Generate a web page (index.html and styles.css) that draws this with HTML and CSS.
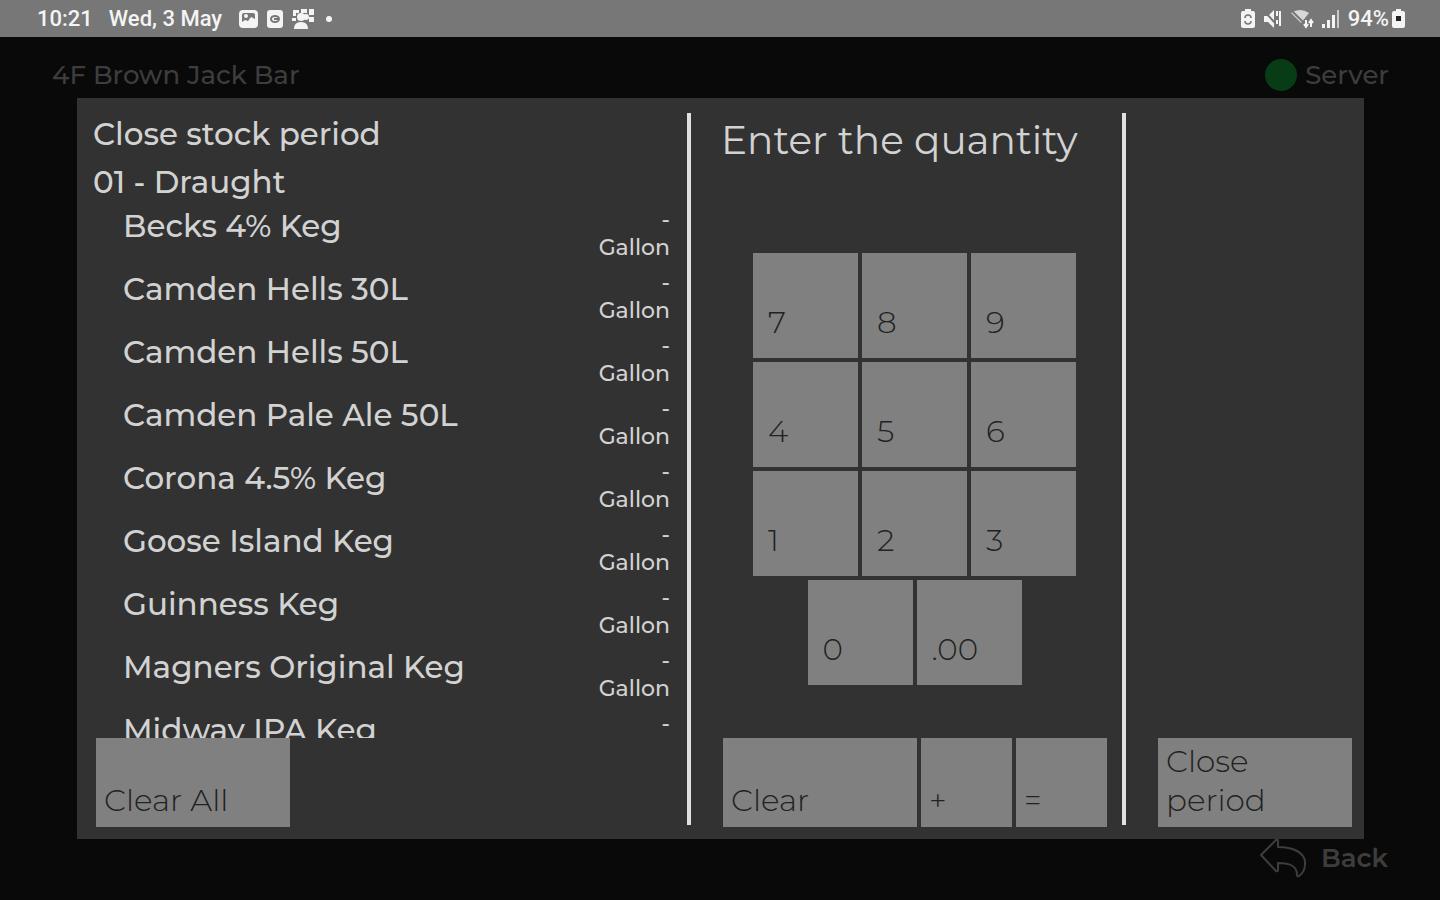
FILE: index.html
```html
<!DOCTYPE html>
<html lang="en">
<head>
  <meta charset="UTF-8">
  <meta name="viewport" content="width=device-width, initial-scale=1.0">
  <title>Close stock period</title>
  <link rel="stylesheet" href="styles.css">
</head>
<body>

  <div class="status-bar">
    <span class="clock">10:21</span>
    <span class="date">Wed, 3 May</span>
    <div class="notifications">
      <svg width="19" height="18" viewBox="0 0 19 18">
        <rect x="0" y="0" width="19" height="18" rx="4" fill="#f4f4f4"/>
        <path d="M3 5q0-2 2-2h9q2 0 2 2v4l-4-2-3 4-3-1-3 2z" fill="#777"/>
        <circle cx="7" cy="6" r="2" fill="#f4f4f4"/>
      </svg>
      <svg width="16" height="18" viewBox="0 0 16 18">
        <rect x="0" y="0" width="16" height="18" rx="3" fill="#f4f4f4"/>
        <ellipse cx="8" cy="9" rx="4" ry="3" fill="none" stroke="#777" stroke-width="2"/>
        <path d="M7 9h5" stroke="#777" stroke-width="2"/>
      </svg>
      <svg width="23" height="20" viewBox="0 0 23 20">
        <path d="M1 1h6v3H4v3H1zM9 0h6v4H9zM17 0h5v6h-5zM17 8h5v5h-5zM0 9h4v3H0z" fill="#f4f4f4"/>
        <circle cx="9" cy="8" r="4" fill="#f4f4f4"/>
        <circle cx="14" cy="8" r="3" fill="#f4f4f4"/>
        <path d="M2 20c0-4 2-7 7-7s7 3 7 7z" fill="#f4f4f4"/>
      </svg>
      <span class="dot"></span>
    </div>
    <div class="system">
      <svg width="14" height="19" viewBox="0 0 14 19">
        <path d="M4 0h6v2h2q2 0 2 2v13q0 2-2 2H2q-2 0-2-2V4q0-2 2-2h2z" fill="#f4f4f4"/>
        <path d="M4 9q0-3 3-3t3 3M4 12q0 3 3 3t3-3" fill="none" stroke="#777" stroke-width="1.5"/>
      </svg>
      <svg width="19" height="20" viewBox="0 0 19 20">
        <path d="M1 7h4l6-6v18l-6-6H1z" fill="#f4f4f4"/>
        <path d="M1 2l14 15" stroke="#777" stroke-width="2"/>
        <path d="M14 2v5M17 2v15M14 11v4" stroke="#f4f4f4" stroke-width="2"/>
      </svg>
      <svg width="24" height="20" viewBox="0 0 24 20">
        <path d="M1 4q9-6 18 0l-8 10z" fill="#d8d8d8"/>
        <path d="M2 2l14 14" stroke="#777" stroke-width="2"/>
        <path d="M16 11v7M14 15l2 3 2-3M21 18v-7M19 14l2-3 2 3" stroke="#f4f4f4" stroke-width="2" fill="none"/>
      </svg>
      <svg width="18" height="20" viewBox="0 0 18 20">
        <path d="M0 15h3v4H0zM5 11h3v8H5zM10 6h3v13h-3z" fill="#f4f4f4"/>
        <path d="M15 1h2v18h-2z" fill="#c9c9c9"/>
      </svg>
      <span class="percent">94%</span>
      <svg width="13" height="19" viewBox="0 0 13 19">
        <path d="M4 0h5v2h2q2 0 2 2v13q0 2-2 2H2q-2 0-2-2V4q0-2 2-2h2z" fill="#f4f4f4"/>
        <path d="M4 7h5v5H4z" fill="#222"/>
      </svg>
    </div>
  </div>

  <header class="top-bar">
    <span>4F Brown Jack Bar</span>
    <span class="server"><span class="server-light"></span>Server</span>
  </header>

  <main class="panel">
    <section class="stock">
      <h1>Close stock period</h1>
      <h2>01 - Draught</h2>
      <ul class="items">
        <li><span class="name">Becks 4% Keg</span><span class="amount">-<br>Gallon</span></li>
        <li><span class="name">Camden Hells 30L</span><span class="amount">-<br>Gallon</span></li>
        <li><span class="name">Camden Hells 50L</span><span class="amount">-<br>Gallon</span></li>
        <li><span class="name">Camden Pale Ale 50L</span><span class="amount">-<br>Gallon</span></li>
        <li><span class="name">Corona 4.5% Keg</span><span class="amount">-<br>Gallon</span></li>
        <li><span class="name">Goose Island Keg</span><span class="amount">-<br>Gallon</span></li>
        <li><span class="name">Guinness Keg</span><span class="amount">-<br>Gallon</span></li>
        <li><span class="name">Magners Original Keg</span><span class="amount">-<br>Gallon</span></li>
        <li><span class="name">Midway IPA Keg</span><span class="amount">-</span></li>
      </ul>
      <div class="actions">
        <button class="btn wide" type="button">Clear All</button>
      </div>
    </section>

    <div class="divider"></div>

    <section class="quantity">
      <h2 class="prompt">Enter the quantity</h2>
      <div class="keypad">
        <button class="key" type="button">7</button>
        <button class="key" type="button">8</button>
        <button class="key" type="button">9</button>
        <button class="key" type="button">4</button>
        <button class="key" type="button">5</button>
        <button class="key" type="button">6</button>
        <button class="key" type="button">1</button>
        <button class="key" type="button">2</button>
        <button class="key" type="button">3</button>
        <button class="key" type="button">0</button>
        <button class="key" type="button">.00</button>
      </div>
      <div class="actions">
        <button class="btn wide" type="button">Clear</button>
        <button class="btn sign" type="button">+</button>
        <button class="btn sign" type="button">=</button>
      </div>
    </section>

    <div class="divider"></div>

    <section class="finish">
      <div class="actions">
        <button class="btn wide" type="button">Close period</button>
      </div>
    </section>
  </main>

  <footer class="bottom-bar">
    <button class="back" type="button">
      <svg width="48" height="40" viewBox="0 0 48 40">
        <path d="M2 17L17 2q2-1 2 1v6c14 0 28 5 27 17q0 8-6 12q-2 1-2-1c0-8-5-12-19-12v7q0 2-2 1z" fill="none" stroke="#3d3d3d" stroke-width="2" stroke-linejoin="round"/>
      </svg>
      Back
    </button>
  </footer>

</body>
</html>
```
FILE: styles.css
```css
* {
  box-sizing: border-box;
}
body {
  margin: 0;
  min-height: 100vh;
  display: flex;
  flex-direction: column;
  background-color: #090909;
  color: #d2d2d2;
  font-family: Montserrat, Inter, sans-serif;
  font-weight: 500;
}
h1, h2, ul {
  margin: 0;
  padding: 0;
}
button {
  border: 0;
  font-family: inherit;
  text-align: left;
}

/* status bar */
.status-bar {
  display: flex;
  align-items: center;
  height: 37px;
  padding: 0 35px 0 37px;
  background-color: #777;
  color: #f4f4f4;
  font-family: Roboto, sans-serif;
  font-size: 22px;
}
.date {
  margin-left: 16px;
}
.notifications {
  display: flex;
  align-items: center;
  gap: 9px;
  margin-left: 17px;
}
.dot {
  width: 6px;
  height: 6px;
  margin-left: 2px;
  border-radius: 50%;
  background-color: #f4f4f4;
}
.system {
  display: flex;
  align-items: center;
  gap: 8px;
  margin-left: auto;
}
.system .percent {
  margin-right: -5px;
}

/* bars above and below the panel */
.top-bar {
  display: flex;
  justify-content: space-between;
  align-items: center;
  height: 61px;
  padding: 14px 51px 0 52px;
  color: #3d3d3d;
  font-size: 26px;
}
.server {
  display: flex;
  align-items: center;
  gap: 8px;
}
.server-light {
  width: 32px;
  height: 32px;
  border-radius: 50%;
  background-color: #083c16;
}
.bottom-bar {
  display: flex;
  justify-content: flex-end;
  height: 62px;
  padding: 0 52px;
}
.back {
  display: flex;
  align-items: center;
  gap: 14px;
  height: 38px;
  padding: 0;
  background: none;
  color: #3d3d3d;
  font-size: 26px;
  font-weight: 600;
}

/* panel */
.panel {
  flex: 1;
  display: grid;
  grid-template-columns: 610fr 4px 431fr 4px 238fr;
  margin: 0 76px 0 77px;
  padding: 15px 0 12px;
  background-color: #323232;
}
.panel section {
  display: flex;
  flex-direction: column;
}
.divider {
  margin-bottom: 2px;
  background-color: #e0e0e0;
}
.actions {
  display: flex;
  gap: 4px;
  margin-top: auto;
}
.btn {
  display: flex;
  align-items: flex-end;
  height: 89px;
  padding: 0 8px 7px;
  background-color: #808080;
  color: #222;
  font-size: 31px;
  font-weight: 300;
  line-height: 39px;
}
.wide {
  width: 194px;
}
.sign {
  width: 91px;
}

/* stock list */
.stock {
  padding: 0 17px 0 16px;
}
.stock .actions {
  padding-left: 3px;
}
.stock h1, .stock h2, .name {
  font-size: 31px;
  font-weight: 500;
  line-height: 42px;
}
.stock h2 {
  margin: 6px 0 2px;
}
.items {
  height: 533px;
  overflow: hidden;
  list-style: none;
}
.items li {
  display: flex;
  justify-content: space-between;
  height: 63px;
  padding-left: 30px;
}
.amount {
  padding-top: 1px;
  font-size: 22px;
  line-height: 28px;
  text-align: right;
}

/* keypad */
.quantity {
  padding: 0 14px 0 30px;
}
.quantity .actions {
  padding-left: 2px;
}
.prompt {
  font-size: 39px;
  font-weight: 400;
  line-height: 54px;
}
.keypad {
  display: flex;
  flex-wrap: wrap;
  justify-content: center;
  align-self: center;
  gap: 4px;
  width: 323px;
  margin-top: 86px;
}
.key {
  display: flex;
  align-items: flex-end;
  width: 105px;
  height: 105px;
  padding: 0 15px 17px;
  background-color: #808080;
  color: #222;
  font-size: 31px;
  font-weight: 300;
}

.finish {
  padding: 0 12px 0 32px;
}
```
